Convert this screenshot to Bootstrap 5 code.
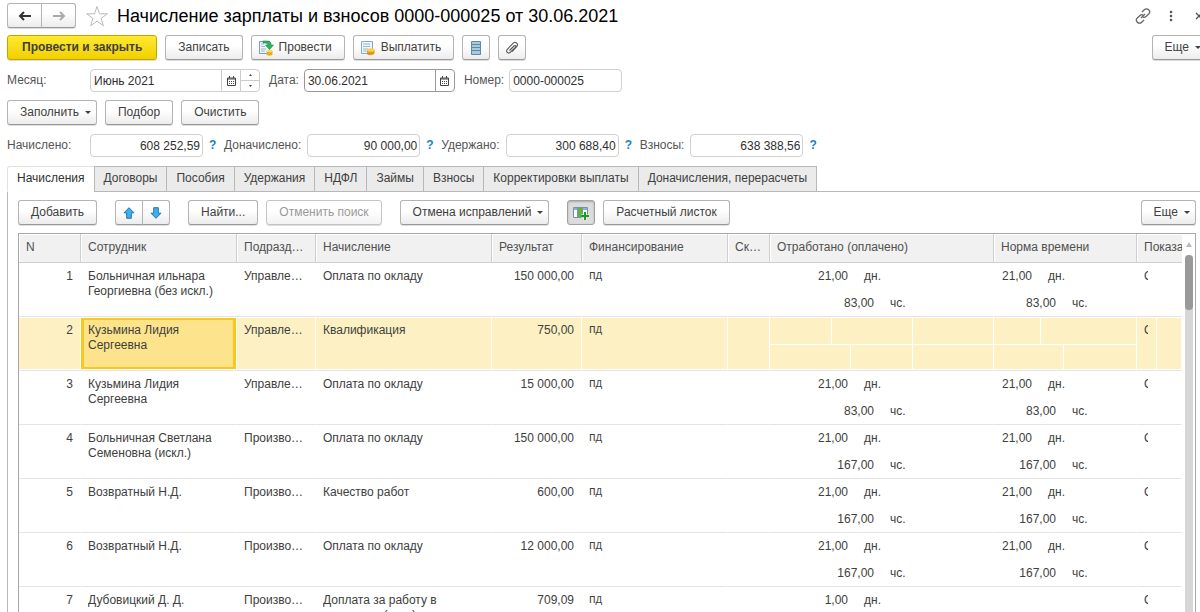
<!DOCTYPE html>
<html lang="ru">
<head>
<meta charset="utf-8">
<meta name="viewport" content="width=device-width, initial-scale=1">
<title>Начисление зарплаты и взносов</title>
<link href="https://cdn.jsdelivr.net/npm/bootstrap@5.3.0/dist/css/bootstrap.min.css" rel="stylesheet">
<style>
  body { font: 12px/15px "Liberation Sans", Arial, sans-serif; color: #404040; background: #fff; overflow: hidden; height: 100vh; padding-left: 7px; }
  .doc-head { height: 31px; margin-right: -7px; }
  .doc-title { font-size: 18px; line-height: 22px; color: #000; font-weight: 400; }
  .btn-c { font-size: 12px; line-height: 15px; height: 25px; padding: 0 12px; color: #404040; border: 1px solid #b4b4b4; border-bottom-color: #999; border-radius: 3px; background: linear-gradient(#fff 40%, #ececec); box-shadow: 0 1px 0 #ddd; white-space: nowrap; display: inline-flex; align-items: center; justify-content: center; flex: none; }
  .btn-c:disabled { color: #999; border-color: #c4c4c4; background: linear-gradient(#fff 40%, #f2f2f2); opacity: 1; }
  .btn-main, .btn-main:hover { font-weight: 700; padding: 0 14px; background: linear-gradient(#ffea30, #f0d000); border-color: #c0a600; color: #404040; }
  .btn-pic { padding-left: 6px; gap: 5px; }
  .btn-square { width: 28px; padding: 0; }
  .btn-pressed { background: #dcdcdc; border-color: #a0a0a0; box-shadow: inset 0 1px 2px #aaa; }
  .btn-nav { width: 35px; padding: 0; }
  .caret { width: 0; height: 0; border: 3px solid transparent; border-top-color: #404040; border-bottom: 0; margin-left: 6px; margin-right: -7px; }
  .star { margin: 0 8px 0 9px; }
  .tool-row { padding: 4px 0; height: 34px; }
  .edge { margin-right: -7px; }
  .group-start { margin-left: 10px; }
  .group-end { margin-right: 10px; }
  .field-row { height: 31px; }
  .totals-row { height: 31px; margin-bottom: 5px; }
  .lbl { color: #555; flex: none; }
  .lbl-first { width: 83px; }
  .lbl-next { margin: 0 5px 0 9px; }
  .lbl-sum { margin-right: 6px; }
  .fld { font-size: 12px; line-height: 15px; height: 23px; padding: 0 4px 0 3px; border: 1px solid #d0d0d0; border-radius: 4px; color: #303030; box-shadow: none; min-width: 0; }
  .fld-btn { width: 20px; padding: 0; border: 1px solid #ccc; background: #fff; margin-left: -1px; display: flex; align-items: center; justify-content: center; }
  .fld-group { height: 23px; display: flex; }
  .fld-group .fld { border-radius: 4px 0 0 4px; }
  .fld-group > :last-child { border-radius: 0 4px 4px 0; }
  .fld-dark .fld, .fld-dark .fld-btn { border-color: #999; }
  .fld-date { width: 132px; }
  .fld-sum { width: 113px; text-align: right; padding-right: 2px; }
  .help { color: #1a80c4; font-weight: 700; text-decoration: none; width: 21px; padding-left: 6px; flex: none; }
  .spin { flex-direction: column; }
  .spin button { flex: 1; width: 18px; border: 0; background: none; padding: 0; display: flex; align-items: center; justify-content: center; }
  .spin button + button { border-top: 1px solid #ccc; }
  .tabs-c { height: 25px; border: 0; flex-wrap: nowrap; position: relative; z-index: 1; }
  .tabs-c .nav-link { font-size: 12px; line-height: 15px; height: 26px; padding: 4px 9px 5px; color: #404040; background: #ebebeb; border: 1px solid #b8b8b8; border-radius: 0; margin: 0 0 0 -1px; white-space: nowrap; }
  .tabs-c .nav-item:first-child .nav-link { margin-left: 0; border-radius: 3px 0 0 0; }
  .tabs-c .nav-link.active { background: #fff; border-bottom-color: #fff; color: #303030; }
  .panel { border: 1px solid #b8b8b8; border-width: 1px 0 0 1px; padding: 8px 4px 0 10px; flex: 1; min-height: 0; }
  .grid-frame { border: 1px solid #a8a8a8; border-bottom: 0; flex: 1; min-height: 0; overflow: hidden; }
  .grid-view { flex: 1; min-width: 0; overflow: hidden; }
  .grid-t { table-layout: fixed; width: 100%; min-width: 1163px; border-collapse: separate; border-spacing: 0; }
  .grid-t th { height: 29px; background: #f1f1f1; color: #505050; font-weight: 400; padding: 0 7px 1px; border-right: 1px solid #cfcfcf; border-bottom: 1px solid #cfcfcf; box-shadow: inset 1px 1px #fff; white-space: nowrap; }
  .grid-t th:last-child { border-right: 0; padding-right: 0; overflow: hidden; }
  .grid-t td { height: 54px; padding: 6px 7px 0; vertical-align: top; border-right: 1px solid transparent; border-bottom: 1px solid #e4e4e4; }
  .cell-text { height: 46px; overflow: hidden; }
  .fin { font-family: "Liberation Mono", monospace; font-size: 11px; }
  .grid-t td.hours { padding: 0; }
  .hours div { height: 27px; padding-top: 6px; display: flex; }
  .hours div + div { height: 26px; }
  .hours span { text-align: right; margin-right: 16px; }
  .w-a1 { width: 78px; } .w-a2 { width: 104px; } .w-n1 { width: 38px; } .w-n2 { width: 62px; }
  .grid-t tr.sel td { background: #fdf1c4; border-right-color: #fff; box-shadow: inset 0 1px #fff, inset 0 -1px #fff; }
  .grid-t tr.sel td.cur { background: #fde48c; box-shadow: inset 0 1px #fff, inset 0 -1px #fff, inset 0 0 0 3px #f8c81c; }
  .sel .hours div { padding: 0; }
  .sel .hours div + div { border-top: 1px solid #fff; }
  .sel .hours span { margin: 0; border-right: 1px solid #fff; }
  .s62 { width: 62px; } .s81 { width: 81px; } .s47 { width: 47px; } .s70 { width: 70px; }
  .grid-t td.last { padding: 0; }
  .last span { display: block; height: 53px; width: 20px; padding: 6px 7px 0; overflow: hidden; }
  .last b { display: block; width: 4px; overflow: hidden; font-weight: 400; }
  .sel .last span { border-right: 1px solid #fff; }
  .scroll-c { width: 13px; flex: none; display: flex; flex-direction: column; align-items: center; }
  .scroll-track { width: 8px; flex: 1; background: #d6d6d6; border-radius: 4px 4px 0 0; }
  .scroll-thumb { height: 55px; background: #999; border-radius: 4px; }
  svg { flex: none; display: block; }
</style>
</head>
<body class="d-flex flex-column">
<header class="doc-head d-flex align-items-center">
  <div class="btn-group">
    <button class="btn btn-c btn-nav" aria-label="Назад"><svg width="14" height="10" viewBox="0 0 14 10"><path d="M6 1 2 5l4 4M2 5h11" fill="none" stroke="#333" stroke-width="2"/></svg></button>
    <button class="btn btn-c btn-nav" aria-label="Вперед"><svg width="14" height="10" viewBox="0 0 14 10"><path d="m8 1 4 4-4 4M12 5H1" fill="none" stroke="#aaa" stroke-width="2"/></svg></button>
  </div>
  <svg class="star" width="24" height="22" viewBox="0 0 24 22"><path d="m12 1.500 2.500 7.300h7.800l-6.200 4.600 2.300 7.300-6.400-4.500-6.400 4.500 2.300-7.300-6.200-4.600h7.800z" fill="#fff" stroke="#b4bac4"/></svg>
  <h1 class="doc-title m-0">Начисление зарплаты и взносов 0000-000025 от 30.06.2021</h1>
  <div class="ms-auto d-flex align-items-center gap-3">
    <svg width="16" height="16" viewBox="0 0 16 16" fill="none" stroke="#666" stroke-width="1.3"><path d="m7 4 2.300-2.200a3 3 0 0 1 4.400 0 3 3 0 0 1 0 4.200L11 8.500a3 3 0 0 1-3 .6M9 12l-2.300 2.200a3 3 0 0 1-4.400 0 3 3 0 0 1 0-4.200L5 7.500a3 3 0 0 1 3-.6M6 10l4-4"/></svg>
    <svg width="8" height="12" viewBox="0 0 8 12" fill="#555"><circle cx="4" cy="2" r="1.300"/><circle cx="4" cy="6" r="1.300"/><circle cx="4" cy="10" r="1.300"/></svg>
    <svg class="mx-1" width="8" height="8" viewBox="0 0 8 8"><path d="m1 1 6 6M7 1 1 7" stroke="#555" stroke-width="1.300"/></svg>
  </div>
</header>

<div class="tool-row edge d-flex gap-2">
  <button class="btn btn-c btn-main">Провести и закрыть</button>
  <button class="btn btn-c">Записать</button>
  <button class="btn btn-c btn-pic"><svg width="16" height="16" viewBox="0 0 16 16"><path d="M1.500 1.500h10v12h-10z" fill="#eef5fb" stroke="#7d9ab0"/><path d="M3 4h3M3 6.500h4M3 9h5M3 11h4" stroke="#9cb8cc"/><path d="M5 1h4c3 0 4 1 4 4h2.500L11.500 9.500 7.500 5H10c0-1.500-1-2-5-2z" fill="#27b45e" stroke="#168a43" stroke-width=".6"/><path d="M8.500 11v3.500c0 1.500 6 1.500 6 0V11z" fill="#e8ae20"/><ellipse cx="11.500" cy="11" rx="3" ry="1.300" fill="#ffdc60"/></svg>Провести</button>
  <button class="btn btn-c btn-pic"><svg width="16" height="16" viewBox="0 0 16 16"><path d="M1.500 1.500h11v12h-11z" fill="#eef5fb" stroke="#8ba9bf"/><path d="M3 4h7M3 6.500h7M3 9h5M3 11h4" stroke="#9cb8cc"/><path d="M7 10.500v3c0 2.500 7.500 2 7.500-.5v-3z" fill="#dc981c"/><ellipse cx="10.800" cy="10" rx="3.800" ry="1.800" fill="#ffcf48"/></svg>Выплатить</button>
  <button class="btn btn-c btn-square" aria-label="Движения документа"><svg width="10" height="14" viewBox="0 0 10 14"><path d="M.5.5h9v13h-9z" fill="#a9c9df" stroke="#6189a4"/><path d="M1 3.500h8M1 6.500h8M1 9.500h8" stroke="#5c88a6"/></svg></button>
  <button class="btn btn-c btn-square" aria-label="Присоединенные файлы"><svg width="14" height="14" viewBox="0 0 14 14" fill="none" stroke="#555" stroke-width="1.1"><path d="M4.500 9.500 9 5c1.200-1.200 2.500 0 1.400 1.300L5.500 11.200c-2.200 2.200-5.300-.6-3.200-2.900L8 2.300c2.500-2.500 6 .7 3.700 3.300L7 10.500"/></svg></button>
  <button class="btn btn-c ms-auto">Еще<i class="caret"></i></button>
</div>

<div class="field-row d-flex align-items-center">
  <label class="lbl lbl-first" for="month">Месяц:</label>
  <div class="fld-group"><input class="form-control fld fld-date" id="month" value="Июнь 2021"><button class="fld-btn" aria-label="Выбрать месяц"><svg width="9" height="10" viewBox="0 0 9 10"><path d="M.5 2h8v7.500h-8zM.5 3h8M2.500 0v2M6.500 0v2" fill="none" stroke="#444"/><path d="M2 5.500h5M2 7.500h5" stroke="#444" stroke-dasharray="1 1"/></svg></button><div class="fld-btn spin"><button aria-label="Больше"><svg width="3" height="2" viewBox="0 0 3 2"><path d="M0 2 1.500 0 3 2z" fill="#444"/></svg></button><button aria-label="Меньше"><svg width="3" height="2" viewBox="0 0 3 2"><path d="M0 0h3L1.500 2z" fill="#444"/></svg></button></div></div>
  <label class="lbl lbl-next" for="date">Дата:</label>
  <div class="fld-group fld-dark"><input class="form-control fld fld-date" id="date" value="30.06.2021"><button class="fld-btn" aria-label="Выбрать дату"><svg width="9" height="10" viewBox="0 0 9 10"><path d="M.5 2h8v7.500h-8zM.5 3h8M2.500 0v2M6.500 0v2" fill="none" stroke="#444"/><path d="M2 5.500h5M2 7.500h5" stroke="#444" stroke-dasharray="1 1"/></svg></button></div>
  <label class="lbl lbl-next" for="num">Номер:</label>
  <input class="form-control fld fld-sum text-start" id="num" value="0000-000025">
</div>

<div class="tool-row d-flex gap-2">
  <button class="btn btn-c">Заполнить<i class="caret"></i></button>
  <button class="btn btn-c">Подбор</button>
  <button class="btn btn-c">Очистить</button>
</div>

<div class="totals-row d-flex align-items-center">
  <label class="lbl lbl-first" for="s1">Начислено:</label><input class="form-control fld fld-sum" id="s1" value="608 252,59"><a class="help" href="#">?</a>
  <label class="lbl lbl-sum" for="s2">Доначислено:</label><input class="form-control fld fld-sum" id="s2" value="90 000,00"><a class="help" href="#">?</a>
  <label class="lbl lbl-sum" for="s3">Удержано:</label><input class="form-control fld fld-sum" id="s3" value="300 688,40"><a class="help" href="#">?</a>
  <label class="lbl lbl-sum" for="s4">Взносы:</label><input class="form-control fld fld-sum" id="s4" value="638 388,56"><a class="help" href="#">?</a>
</div>

<ul class="nav nav-tabs tabs-c">
  <li class="nav-item"><a class="nav-link active" href="#">Начисления</a></li>
  <li class="nav-item"><a class="nav-link" href="#">Договоры</a></li>
  <li class="nav-item"><a class="nav-link" href="#">Пособия</a></li>
  <li class="nav-item"><a class="nav-link" href="#">Удержания</a></li>
  <li class="nav-item"><a class="nav-link" href="#">НДФЛ</a></li>
  <li class="nav-item"><a class="nav-link" href="#">Займы</a></li>
  <li class="nav-item"><a class="nav-link" href="#">Взносы</a></li>
  <li class="nav-item"><a class="nav-link" href="#">Корректировки выплаты</a></li>
  <li class="nav-item"><a class="nav-link" href="#">Доначисления, перерасчеты</a></li>
</ul>

<main class="panel d-flex flex-column">
  <div class="d-flex gap-2 mb-2">
    <button class="btn btn-c">Добавить</button>
    <div class="btn-group group-start group-end">
      <button class="btn btn-c btn-square" aria-label="Вверх"><svg width="12" height="12" viewBox="0 0 12 12"><path d="m6 .7 5 5.100H8.300v5.500H3.700V5.800H1z" fill="#3fb0ee" stroke="#1c78ae"/></svg></button>
      <button class="btn btn-c btn-square" aria-label="Вниз"><svg width="12" height="12" viewBox="0 0 12 12"><path d="m6 11.300 5-5.100H8.300V.7H3.700v5.500H1z" fill="#3fb0ee" stroke="#1c78ae"/></svg></button>
    </div>
    <button class="btn btn-c">Найти...</button>
    <button class="btn btn-c" disabled>Отменить поиск</button>
    <button class="btn btn-c group-start">Отмена исправлений<i class="caret"></i></button>
    <button class="btn btn-c btn-square btn-pressed group-start" aria-label="Показать колонки"><svg width="16" height="14" viewBox="0 0 16 14"><path d="M.5 1.500h14v10H.5z" fill="#fff" stroke="#6f93aa"/><path d="M1 2h13v2H1z" fill="#8fb4ca"/><path d="M5 2h4v9H5z" fill="#62b43e"/><path d="M4.500 2v9M9.500 2v9" stroke="#6f93aa"/><path d="M12 6v8M8 10h8" stroke="#fff" stroke-width="3"/><path d="M12 6v8M8 10h8" stroke="#1d9c1d" stroke-width="2"/></svg></button>
    <button class="btn btn-c">Расчетный листок</button>
    <button class="btn btn-c ms-auto">Еще<i class="caret"></i></button>
  </div>
  <div class="grid-frame d-flex">
    <div class="grid-view">
      <table class="grid-t">
        <colgroup><col style="width:62px"><col style="width:156px"><col style="width:79px"><col style="width:176px"><col style="width:90px"><col style="width:146px"><col style="width:42px"><col style="width:224px"><col style="width:143px"><col></colgroup>
        <thead><tr><th>N</th><th>Сотрудник</th><th>Подразд…</th><th>Начисление</th><th>Результат</th><th>Финансирование</th><th>Ск…</th><th>Отработано (оплачено)</th><th>Норма времени</th><th>Показа</th></tr></thead>
        <tbody id="rows"></tbody>
      </table>
    </div>
    <div class="scroll-c"><svg class="my-2" width="6" height="5" viewBox="0 0 6 5"><path d="m3 0 3 5H0z" fill="#bbb"/></svg><div class="scroll-track"><div class="scroll-thumb"></div></div></div>
  </div>
</main>
<script src="https://cdn.jsdelivr.net/npm/bootstrap@5.3.0/dist/js/bootstrap.bundle.min.js"></script>
<script>
  const data = [
    ['Больничная ильнара Георгиевна (без искл.)', 'Управле…', 'Оплата по окладу', '150 000,00', '21,00', '83,00'],
    ['Кузьмина Лидия Сергеевна', 'Управле…', 'Квалификация', '750,00'],
    ['Кузьмина Лидия Сергеевна', 'Управле…', 'Оплата по окладу', '15 000,00', '21,00', '83,00'],
    ['Больничная Светлана Семеновна (искл.)', 'Произво…', 'Оплата по окладу', '150 000,00', '21,00', '167,00'],
    ['Возвратный Н.Д.', 'Произво…', 'Качество работ', '600,00', '21,00', '167,00'],
    ['Возвратный Н.Д.', 'Произво…', 'Оплата по окладу', '12 000,00', '21,00', '167,00'],
    ['Дубовицкий Д. Д.', 'Произво…', 'Доплата за работу в праздники (вых.)', '709,09', '1,00', '']
  ];
  const line = (w, v, u) => v ? `<div><span class="${w}">${v}</span>${u}</div>` : '<div></div>';
  document.getElementById('rows').innerHTML = data.map(([who, dept, kind, sum, d, h], i) => {
    const sel = i === 1, norm = d === '21,00';
    const fact = sel ? '<div><span class="s62"></span><span class="s81"></span></div><div><span class="s81"></span><span class="s62"></span></div>'
                     : line('w-a1', d, 'дн.') + line('w-a2', h, 'чс.');
    const plan = sel ? '<div><span class="s47"></span></div><div><span class="s70"></span></div>'
                     : norm ? line('w-n1', d, 'дн.') + line('w-n2', h, 'чс.') : '';
    return `<tr class="${sel ? 'sel' : ''}"><td class="text-end">${i + 1}</td><td class="${sel ? 'cur' : ''}"><div class="cell-text">${who}</div></td><td>${dept}</td><td><div class="cell-text">${kind}</div></td><td class="text-end">${sum}</td><td class="fin">ПД</td><td></td><td class="hours">${fact}</td><td class="hours">${plan}</td><td class="last"><span><b>О</b></span></td></tr>`;
  }).join('');
</script>
</body>
</html>
